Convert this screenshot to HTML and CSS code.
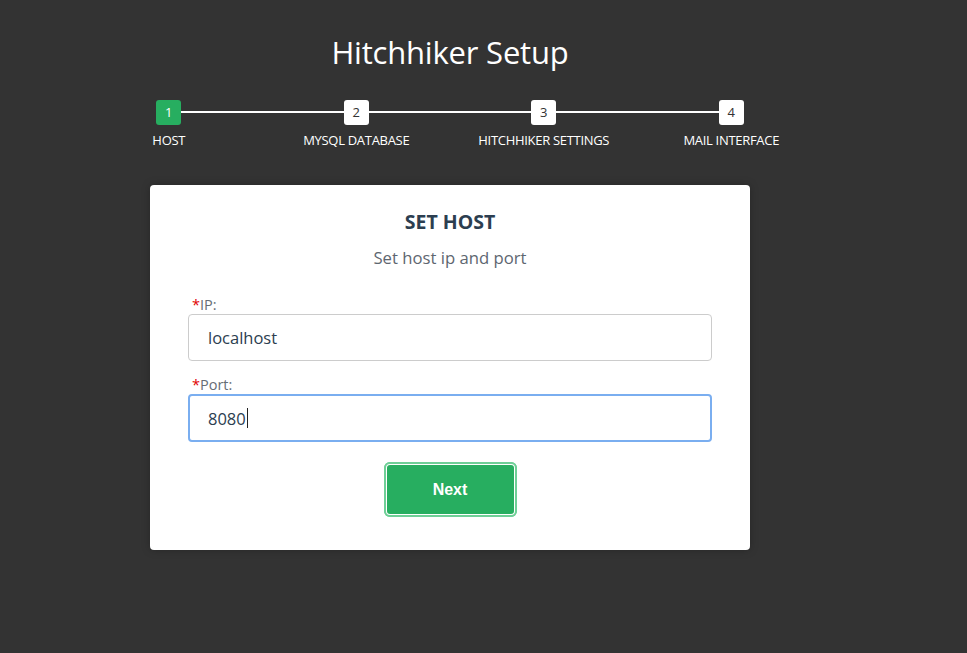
FILE: index.html
```html
<!DOCTYPE html>
<html>
<head>
<meta charset="utf-8">
<link rel="stylesheet" href="styles.css">
</head>
<body>
<div class="app">
  <h1 class="title">Hitchhiker Setup</h1>
  <div class="steps">
    <div class="line"></div>
    <div class="step active"><div class="num">1</div><div class="label">HOST</div></div>
    <div class="step"><div class="num">2</div><div class="label">MYSQL DATABASE</div></div>
    <div class="step"><div class="num">3</div><div class="label">HITCHHIKER SETTINGS</div></div>
    <div class="step"><div class="num">4</div><div class="label">MAIL INTERFACE</div></div>
  </div>
  <div class="card">
    <h2 class="card-title">SET HOST</h2>
    <p class="card-sub">Set host ip and port</p>
    <div class="field">
      <label class="flabel"><span class="req">*</span>IP:</label>
      <div class="input">localhost</div>
    </div>
    <div class="field">
      <label class="flabel"><span class="req">*</span>Port:</label>
      <div class="input focus">8080<span class="caret"></span></div>
    </div>
    <div class="actions">
      <button class="btn">Next</button>
    </div>
  </div>
</div>
</body>
</html>
```
FILE: styles.css
```css
html, body {
  margin: 0;
  padding: 0;
  background: #333333;
  height: 100%;
}
body {
  font-family: "Open Sans", "Noto Sans", sans-serif;
}
.app {
  width: 900px;
  display: flex;
  flex-direction: column;
  align-items: center;
}
.title {
  margin: 30px 0 0 0;
  height: 44px;
  font-size: 31px;
  line-height: 44px;
  font-weight: 400;
  color: #ffffff;
  letter-spacing: -0.2px;
}
.steps {
  margin-top: 26px;
  width: 750px;
  display: grid;
  grid-template-columns: repeat(4, 1fr);
  position: relative;
}
.line {
  position: absolute;
  left: 93px;
  right: 93px;
  top: 11px;
  height: 2px;
  background: #ffffff;
}
.step {
  display: flex;
  flex-direction: column;
  align-items: center;
  position: relative;
}
.num {
  width: 25px;
  height: 25px;
  border-radius: 3px;
  background: #ffffff;
  color: #333;
  font-size: 13px;
  line-height: 25px;
  text-align: center;
}
.step.active .num {
  background: #27ae60;
  color: #ffffff;
}
.label {
  margin-top: 6px;
  font-size: 13px;
  line-height: 18px;
  color: #ffffff;
  font-weight: 500;
  white-space: nowrap;
  letter-spacing: -0.3px;
}
.card {
  margin-top: 36px;
  width: 524px;
  padding: 20px 38px 34px 38px;
  background: #ffffff;
  border-radius: 4px;
  box-shadow: 0 0 8px rgba(0,0,0,0.25);
}
.card-title {
  margin: 3px 0 0 0;
  text-align: center;
  font-size: 19.5px;
  line-height: 28px;
  font-weight: 700;
  color: #2c3e50;
}
.card-sub {
  margin: 10px 0 0 0;
  text-align: center;
  font-size: 16.7px;
  line-height: 24px;
  color: #5e6670;
}
.field {
  margin-top: 15px;
}
.card-sub + .field {
  margin-top: 26px;
}
.flabel {
  display: block;
  padding-left: 4px;
  font-size: 14.5px;
  line-height: 18px;
  color: #666d75;
}
.req {
  color: #e00000;
}
.input {
  margin-top: 0;
  box-sizing: border-box;
  height: 47px;
  border: 1px solid #cccccc;
  border-radius: 4px;
  padding: 0 19px;
  font-size: 16.5px;
  line-height: 45px;
  color: #2c3e50;
  display: flex;
  align-items: center;
}
.input.focus {
  height: 48px;
  border: 2px solid #7aaef0;
  padding: 0 18px;
}
.caret {
  display: inline-block;
  width: 1px;
  height: 20px;
  background: #222;
  margin-left: 1px;
}
.actions {
  margin-top: 21px;
  display: flex;
  justify-content: center;
}
.btn {
  width: 131px;
  height: 53px;
  box-sizing: border-box;
  background: #27ae60;
  border: 2px solid #ffffff;
  outline: 2px solid #6fcf97;
  outline-offset: -1px;
  border-radius: 5px;
  box-shadow: 0 0 0 1px #6fcf97;
  color: #ffffff;
  font-family: "Liberation Sans", Arial, sans-serif;
  font-weight: 700;
  font-size: 16px;
  cursor: pointer;
}
```
